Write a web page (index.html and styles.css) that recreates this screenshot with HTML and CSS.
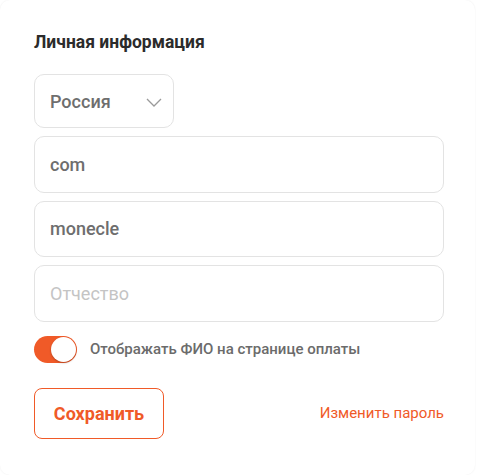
FILE: index.html
```html
<!DOCTYPE html>
<html lang="ru">
<head>
<meta charset="utf-8">
<title>Личная информация</title>
<link rel="stylesheet" href="styles.css">
</head>
<body>
<div class="card">
  <h2 class="title">Личная информация</h2>
  <div class="fields">
    <div class="select">
      <span class="select-value">Россия</span>
      <svg class="chev" width="16" height="9" viewBox="0 0 16 9"><path d="M1 1 L8 8 L15 1" fill="none" stroke="#9a9a9a" stroke-width="1.3"/></svg>
    </div>
    <div class="input"><span class="value">com</span></div>
    <div class="input"><span class="value">monecle</span></div>
    <div class="input"><span class="placeholder">Отчество</span></div>
  </div>
  <div class="toggle-row">
    <span class="toggle"><span class="knob"></span></span>
    <span class="toggle-label">Отображать ФИО на странице оплаты</span>
  </div>
  <div class="actions">
    <button class="save">Сохранить</button>
    <a class="change" href="#">Изменить пароль</a>
  </div>
</div>
</body>
</html>
```
FILE: styles.css
```css
* { box-sizing: border-box; }
html, body { margin: 0; padding: 0; background: #fff; }
body { font-family: Roboto, "Noto Sans", Arial, sans-serif; }
.card {
  width: 475px;
  height: 475px;
  background: #fff;
  border-radius: 10px;
  box-shadow: 0 0 2px rgba(0,0,0,0.07);
  padding: 31px 33px 0 34px;
}
.title {
  margin: 0;
  font-size: 17.5px;
  font-weight: 700;
  color: #2b2b2b;
  line-height: 22px;
}
.fields {
  margin-top: 21px;
  display: flex;
  flex-direction: column;
  gap: 8px;
}
.select {
  width: 140px;
  height: 54px;
  border: 1px solid #e3e3e3;
  border-radius: 10px;
  display: flex;
  align-items: center;
  justify-content: space-between;
  padding: 0 11px 0 15px;
}
.select-value { font-size: 18px; color: #6e6e6e; font-weight: 500; }
.chev { margin-top: 2px; }
.input {
  width: 410px;
  height: 56.5px;
  border: 1px solid #e3e3e3;
  border-radius: 10px;
  display: flex;
  align-items: center;
  padding: 0 15px;
  font-size: 18px;
}
.value { color: #6e6e6e; font-weight: 500; }
.placeholder { color: #c4c4c4; }
.toggle-row {
  margin-top: 14px;
  display: flex;
  align-items: center;
  gap: 13px;
}
.toggle {
  width: 43px;
  height: 27px;
  border-radius: 14px;
  background: #f05a28;
  display: flex;
  align-items: center;
  justify-content: flex-end;
  padding: 1px;
}
.knob {
  width: 25px;
  height: 25px;
  border-radius: 50%;
  background: #fff;
  box-shadow: 0 1px 2px rgba(0,0,0,0.25);
}
.toggle-label { font-size: 15px; font-weight: 500; color: #6b6b6b; }
.actions {
  margin-top: 25px;
  display: flex;
  align-items: center;
  justify-content: space-between;
  width: 410px;
}
.save {
  width: 130px;
  height: 51px;
  border: 1px solid #f05a28;
  border-radius: 8px;
  background: #fff;
  color: #f05a28;
  font-family: Roboto, "Noto Sans", Arial, sans-serif;
  font-size: 18px;
  font-weight: 700;
  padding: 0;
}
.change {
  color: #f05a28;
  font-size: 15px;
  text-decoration: none;
}
```
